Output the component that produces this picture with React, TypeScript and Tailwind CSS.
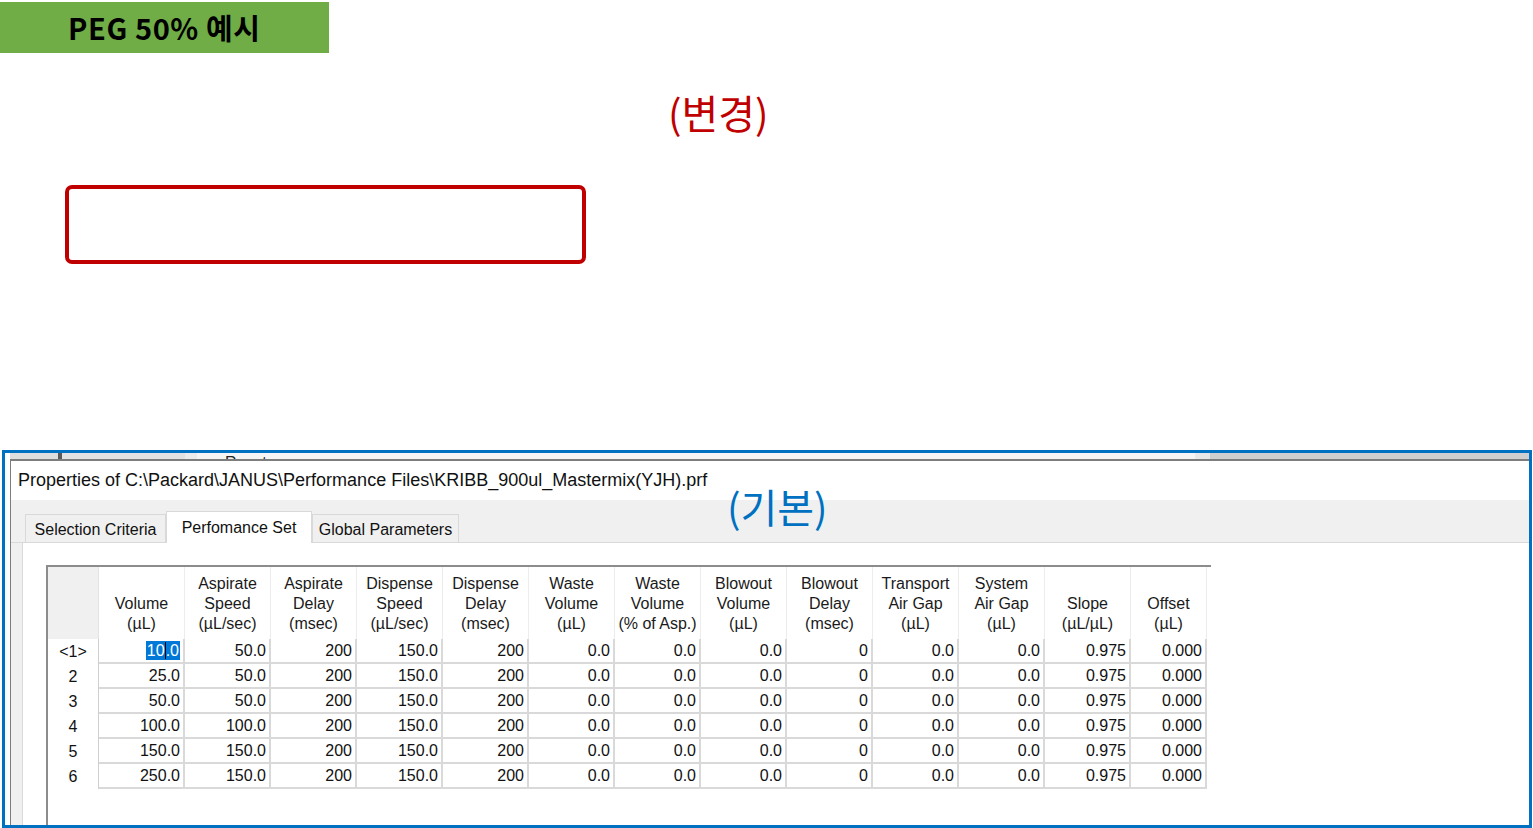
import React from "react";

const headers: string[][] = [
  ["Volume", "(µL)"],
  ["Aspirate", "Speed", "(µL/sec)"],
  ["Aspirate", "Delay", "(msec)"],
  ["Dispense", "Speed", "(µL/sec)"],
  ["Dispense", "Delay", "(msec)"],
  ["Waste", "Volume", "(µL)"],
  ["Waste", "Volume", "(% of Asp.)"],
  ["Blowout", "Volume", "(µL)"],
  ["Blowout", "Delay", "(msec)"],
  ["Transport", "Air Gap", "(µL)"],
  ["System", "Air Gap", "(µL)"],
  ["Slope", "(µL/µL)"],
  ["Offset", "(µL)"],
];

const rows: { label: string; volume: string; aspSpeed: string }[] = [
  { label: "<1>", volume: "10.0", aspSpeed: "50.0" },
  { label: "2", volume: "25.0", aspSpeed: "50.0" },
  { label: "3", volume: "50.0", aspSpeed: "50.0" },
  { label: "4", volume: "100.0", aspSpeed: "100.0" },
  { label: "5", volume: "150.0", aspSpeed: "150.0" },
  { label: "6", volume: "250.0", aspSpeed: "150.0" },
];

const rest = ["200", "150.0", "200", "0.0", "0.0", "0.0", "0", "0.0", "0.0", "0.975", "0.000"];

const cols = "grid grid-cols-[51px_repeat(12,86px)_76px]";

function Tab({ label, active }: { label: string; active?: boolean }) {
  return (
    <div
      className={
        active
          ? "h-[32px] -mb-px bg-white border border-b-0 border-[#d9d9d9] flex items-start pt-[4px] justify-center text-[16px] text-[#111]"
          : "h-[28px] bg-[#f0f0f0] border border-b-0 border-[#d9d9d9] flex items-center justify-center pt-[3px] text-[16px] text-[#111]"
      }
      style={{ width: label === "Selection Criteria" ? 141 : label === "Perfomance Set" ? 146 : 147 }}
    >
      {label}
    </div>
  );
}

function PerformanceGrid() {
  return (
    <div className="w-[1165px] flex-1 border-t-2 border-l-2 border-[#8c8c8c] bg-white">
      <div className={cols}>
        <div className="h-[72px] bg-[#f0f0f0] border-r border-[#e3e3e3]" />
        {headers.map((h, i) => (
          <div
            key={i}
            className="h-[72px] flex flex-col justify-end items-center pb-[5px] leading-[20px] text-[16px] text-[#1a1a1a] border-r border-[#ececec]"
          >
            {h.map((line) => (
              <span key={line} className="whitespace-nowrap">
                {line}
              </span>
            ))}
          </div>
        ))}

        {rows.map((r, ri) => (
          <React.Fragment key={r.label}>
            <div className="h-[25px] flex items-center justify-center text-[16px] text-[#111] border-r border-[#cfcfcf]">
              {r.label}
            </div>
            <div className="h-[25px] flex items-center justify-end pr-[3px] text-[16px] text-[#111] border-r-2 border-b-2 border-[#d9d9d9]">
              {ri === 0 ? (
                <span className="relative bg-[#0078d7] text-white leading-[19px] px-px">
                  10
                  <span className="inline-block w-px h-[17px] bg-black align-middle -mt-[2px]" />
                  .0
                </span>
              ) : (
                r.volume
              )}
            </div>
            <div className="h-[25px] flex items-center justify-end pr-[3px] text-[16px] text-[#111] border-r-2 border-b-2 border-[#d9d9d9]">
              {r.aspSpeed}
            </div>
            {rest.map((v, ci) => (
              <div
                key={ci}
                className="h-[25px] flex items-center justify-end pr-[3px] text-[16px] text-[#111] border-r-2 border-b-2 border-[#d9d9d9]"
              >
                {v}
              </div>
            ))}
          </React.Fragment>
        ))}
      </div>
    </div>
  );
}

export default function App() {
  return (
    <div className="relative w-[1533px] h-[828px] bg-white overflow-hidden font-['Liberation_Sans',Arial,sans-serif]">
      {/* title banner */}
      <div className="mt-[2px] w-[329px] h-[51px] bg-[#70ad47] flex items-center pl-[68px] text-[29px] tracking-[0.6px] font-bold text-black font-['Noto_Sans_CJK_KR',sans-serif]">
        PEG 50% 예시
      </div>

      <div className="mt-[33px] h-[52px] pl-[668px] leading-[52px] text-[40px] text-[#c00000] font-['Noto_Sans_CJK_KR',sans-serif]">
        (변경)
      </div>

      <div className="mt-[47px] ml-[65px] w-[521px] h-[79px] border-4 border-[#c00000] rounded-[7px]" />

      {/* screenshot of the JANUS dialog */}
      <div className="mt-[186px] ml-[2px] w-[1530px] h-[378px] border-[3px] border-[#0070c0] flex flex-col bg-white">
        <div className="h-[6px] flex overflow-hidden">
          <div className="w-[5px] bg-white" />
          <div className="w-[48px] bg-[#dedede]" />
          <div className="w-[4px] bg-[#5a5a5a]" />
          <div className="w-[123px] bg-[#e2e2e2]" />
          <div className="w-[12px] bg-[#ececec]" />
          <div className="w-[998px] bg-[#f5f5f5] pl-[28px] text-[16px] leading-[20px] text-[#222]">Reset</div>
          <div className="w-[15px] bg-[#e8e8e8]" />
          <div className="flex-1 bg-[#cfcfcf]" />
        </div>

        <div className="flex-1 ml-[5px] border-l border-t-2 border-[#7d7d7d] flex flex-col">
          <div className="h-[39px] flex items-center pl-[7px] text-[18px] text-[#111]">
            Properties of C:\Packard\JANUS\Performance Files\KRIBB_900ul_Mastermix(YJH).prf
          </div>

          <div className="h-[43px] bg-[#f0f0f0] flex items-end pl-[14px] border-b border-[#d9d9d9]">
            <Tab label="Selection Criteria" />
            <Tab label="Perfomance Set" active />
            <Tab label="Global Parameters" />
          </div>

          <div className="flex-1 flex">
            <div className="w-[11px] bg-[#f0f0f0]" />
            <div className="flex-1 border-l border-[#d9d9d9] bg-white pl-[23px] pt-[22px] flex flex-col">
              <PerformanceGrid />
            </div>
          </div>
        </div>
      </div>

      {/* overlay label on the screenshot */}
      <div className="absolute left-[727px] top-[480px] leading-[52px] text-[40px] text-[#0070c0] font-['Noto_Sans_CJK_KR',sans-serif]">
        (기본)
      </div>
    </div>
  );
}
